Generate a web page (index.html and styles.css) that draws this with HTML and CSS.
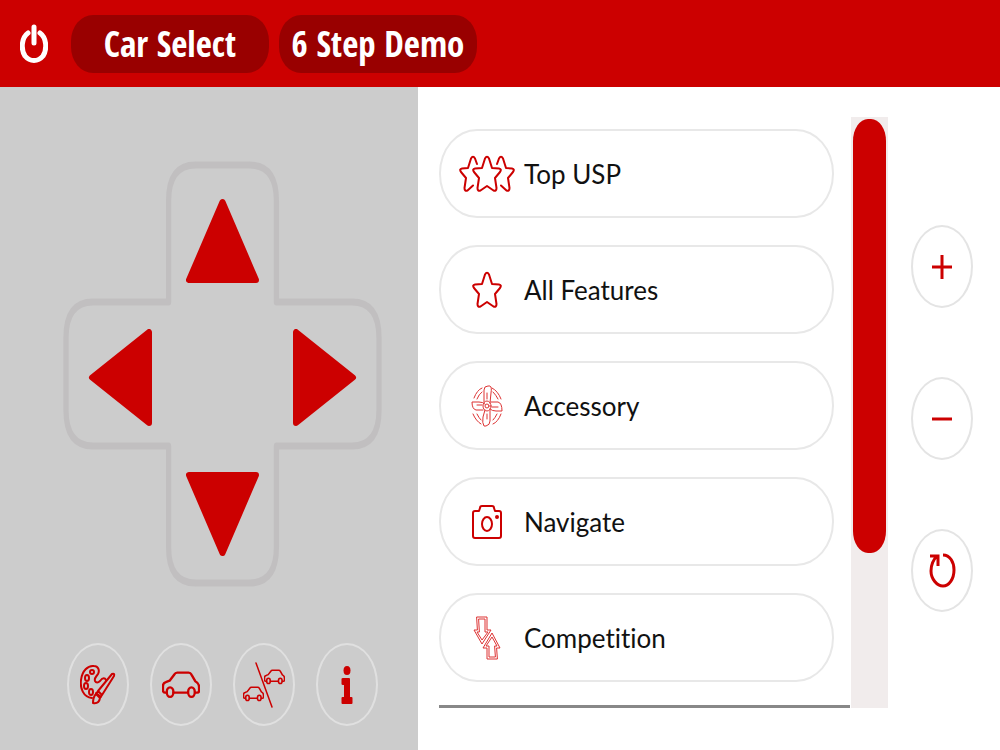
FILE: index.html
```html
<!DOCTYPE html>
<html lang="en">
<head>
    <meta charset="UTF-8">
    <meta name="viewport" content="width=device-width, initial-scale=1.0">
    <title>Car Remote</title>
    <link rel="stylesheet" href="styles.css">
</head>
<body>
    <svg class="sprite" aria-hidden="true">
        <symbol id="star" viewBox="0 0 30 38">
            <path d="M13 3.500q2-3.500 4 0l3 9.500 7 .5q3 .5 1 3.500l-5 6 1.500 10q0 3.500-3 2.500L15 31l-6.500 4.500q-3 1-3-2.500L7 23l-5-6q-2-3 1-3.500l7-.5z"/>
        </symbol>
        <symbol id="car" viewBox="0 0 40 28">
            <path d="M5 22H3q-2 0-2-3v-4q0-3 3-4l4-1.500L13 3q1-2 3-2h12q2 0 3 2l4 7q4 2 4 6v4q0 2-2 2h-2M12 22h15"/>
            <ellipse cx="8.500" cy="21.500" rx="3.500" ry="5"/>
            <ellipse cx="31" cy="21.500" rx="3.500" ry="5"/>
        </symbol>
    </svg>

    <header class="topbar">
        <button class="power" aria-label="Power">
            <svg width="28" height="40" viewBox="0 0 28 40">
                <path d="M8 9C1 14 1 26 5 32c5 6 13 6 18 0C27 26 27 14 20 9M14 3v16"/>
            </svg>
        </button>
        <nav class="tabs">
            <button class="tab">Car Select</button>
            <button class="tab">6 Step Demo</button>
        </nav>
    </header>

    <main class="content">
        <section class="controls">
            <div class="dpad">
                <svg class="dpad-outline" viewBox="0 0 426 426" preserveAspectRatio="none" aria-hidden="true">
                    <path d="M141 141V40q0-36 36-36h72q36 0 36 36v101h101q36 0 36 36v72q0 36-36 36H285v101q0 36-36 36h-72q-36 0-36-36V285H40q-36 0-36-36v-72q0-36 36-36z"/>
                </svg>
                <button class="arrow up" aria-label="Up">
                    <svg width="73" height="85" viewBox="0 0 73 85"><path d="M36.500 4L3 82h67z"/></svg>
                </button>
                <button class="arrow left" aria-label="Left">
                    <svg width="64" height="97" viewBox="0 0 64 97"><path d="M4 48.500L61 3v91z"/></svg>
                </button>
                <button class="arrow right" aria-label="Right">
                    <svg width="64" height="97" viewBox="0 0 64 97"><path d="M60 48.500L3 3v91z"/></svg>
                </button>
                <button class="arrow down" aria-label="Down">
                    <svg width="73" height="85" viewBox="0 0 73 85"><path d="M36.500 81L3 3h67z"/></svg>
                </button>
            </div>

            <div class="tools">
                <button class="round" aria-label="Colours">
                    <svg width="36" height="42" viewBox="0 0 36 42">
                        <path d="M12 34C3 33 0 24 1 16 2 7 8 1 14 2c4 0 6 4 4 8-2 3-4 4-3 7 1 2 3 2 5 0 3-4 5-3 6-1"/>
                        <ellipse cx="12" cy="8" rx="2" ry="2"/>
                        <ellipse cx="7" cy="14" rx="2" ry="3"/>
                        <ellipse cx="6" cy="22" rx="2" ry="3"/>
                        <ellipse cx="11" cy="28" rx="2" ry="3"/>
                        <path d="M18 27L32 10q3-1 2 2L22 31zM16 29l5 4M18 27l-2 3 4 4 2-3M16 30q3 0 4 4-1 6-7 5 0-6 3-9z"/>
                    </svg>
                </button>
                <button class="round" aria-label="Exterior">
                    <svg class="car" width="38" height="28"><use href="#car"/></svg>
                </button>
                <button class="round" aria-label="Compare cars">
                    <svg width="42" height="46" viewBox="0 0 42 46">
                        <path class="slash" d="M13 1l16 44"/>
                        <use href="#car" x="21" y="7" width="21" height="16" class="mini"/>
                        <use href="#car" x="0" y="24" width="21" height="16" class="mini"/>
                    </svg>
                </button>
                <button class="round" aria-label="Information">
                    <svg class="solid" width="12" height="38" viewBox="0 0 12 38">
                        <ellipse cx="6" cy="4.500" rx="3.500" ry="4.500"/>
                        <path d="M2 12h6q1 0 1 1v18h1.500q1 0 1 1v5q0 1-1 1h-9q-1 0-1-1v-5q0-1 1-1H3V19H2q-1.500 0-1.500-1v-5q0-1 1.500-1z"/>
                    </svg>
                </button>
            </div>
        </section>

        <section class="menu">
            <div class="list">
                <button class="item">
                    <span class="icon">
                        <svg width="56" height="38" viewBox="0 0 56 38">
                            <path d="M18 9l-2-5.500q-2-3.500-4 0L9 13l-6 .5q-3 .5-1 3.500l5 6-1.500 10q0 3.500 3 2.500l5.500-5M38 9l2-5.500q2-3.500 4 0l3 9.500 6 .5q3 .5 1 3.500l-5 6 1.500 10q0 3.500-3 2.500L42 30.500"/>
                            <use href="#star" x="13" width="30" height="38"/>
                        </svg>
                    </span>
                    Top USP
                </button>
                <button class="item">
                    <span class="icon"><svg width="30" height="38"><use href="#star"/></svg></span>
                    All Features
                </button>
                <button class="item">
                    <span class="icon">
                        <svg class="fine" width="32" height="42" viewBox="0 0 32 42">
                            <ellipse cx="16" cy="21" rx="4" ry="5"/>
                            <ellipse cx="16" cy="21" rx="2" ry="2"/>
                            <path d="M13 17V5q0-4 4-4h2q2 1 1 7l-1 10M19 25v11q0 4-4 5h-2q-2-3-1-9l2-7M12 25H5q-4-1-4-8h7q4 0 6 2M20 17h7q4 1 4 9h-6q-4 0-6-2M16 8v6M16 29v5M6 20h5M21 22h6"/>
                            <path d="M3 13q3-8 8-10M21 3q6 3 9 11M2 29q3 7 8 10M22 39q5-2 8-10M6 14q2-5 5-7M22 7q3 3 5 7M6 29q2 4 4 6M22 35q2-2 4-6"/>
                        </svg>
                    </span>
                    Accessory
                </button>
                <button class="item">
                    <span class="icon">
                        <svg width="30" height="34" viewBox="0 0 30 34">
                            <path d="M1 8q0-2 2-2h4l1-3q0-2 2-2h10q2 0 2 2l1 3h4q2 0 2 2v23q0 2-2 2H3q-2 0-2-2z"/>
                            <ellipse cx="15" cy="19" rx="5" ry="7"/>
                            <ellipse class="dot" cx="25" cy="12" rx="1" ry="1"/>
                        </svg>
                    </span>
                    Navigate
                </button>
                <button class="item">
                    <span class="icon">
                        <svg class="fine" width="28" height="44" viewBox="0 0 28 44">
                            <path d="M4 1h10v13h4L9 28 1 14h3zM6 3h6v13h3L9 24 4 16h2z"/>
                            <path d="M24 43H14V32h-4l9-15 8 15h-3zM22 41h-6V30h-3l6-9 5 9h-2z"/>
                        </svg>
                    </span>
                    Competition
                </button>
            </div>
            <div class="scrollbar"><div class="thumb"></div></div>
        </section>

        <aside class="zoom">
            <button class="round" aria-label="Zoom in">
                <svg width="20" height="26" viewBox="0 0 20 26"><path d="M10 1v24M0 13h20"/></svg>
            </button>
            <button class="round" aria-label="Zoom out">
                <svg width="20" height="26" viewBox="0 0 20 26"><path d="M0 13h20"/></svg>
            </button>
            <button class="round" aria-label="Reset">
                <svg width="27" height="35" viewBox="0 0 27 35">
                    <path d="M14 2c7 0 11 7 11 15 0 9-5 16-11 16S2 26 2 18C2 11 4 7 8 3M1 3h8v10"/>
                </svg>
            </button>
        </aside>
    </main>
</body>
</html>
```

FILE: styles.css
```css
* {
    box-sizing: border-box;
}
body {
    display: flex;
    flex-direction: column;
    min-height: 100vh;
    margin: 0;
    background-color: #fff;
    font-family: Lato, sans-serif;
}
button {
    padding: 0;
    border: none;
    background: none;
    color: inherit;
    font-family: inherit;
    cursor: pointer;
}
svg {
    display: block;
    fill: none;
    stroke: #c00;
    stroke-width: 2;
    stroke-linecap: round;
    stroke-linejoin: round;
}
.sprite {
    display: none;
}
.topbar {
    display: flex;
    align-items: center;
    gap: 23px;
    height: 87px;
    padding: 0 20px;
    background-color: #c00;
    color: #fff;
}
.power svg {
    stroke: #fff;
    stroke-width: 5;
}
.tabs {
    display: flex;
    gap: 10px;
}
.tab {
    width: 198px;
    height: 58px;
    border-radius: 22px / 26px;
    background-color: #900;
    font-family: "Open Sans Condensed", "Open Sans", sans-serif;
    font-size: 35px;
    font-weight: bold;
}
.content {
    display: flex;
    flex: 1;
}
.controls {
    display: flex;
    flex: 0 0 auto;
    flex-direction: column;
    align-items: center;
    gap: 56px;
    width: 41.8%;
    padding: 74px 0 25px 27px;
    background-color: #ccc;
}
.dpad {
    display: grid;
    grid-template-columns: 106px 107px 106px;
    grid-template-rows: 142px 142px 142px;
}
.dpad-outline {
    grid-area: 1 / 1 / 4 / 4;
    width: 100%;
    height: 100%;
    stroke: #c1bfc0;
    stroke-width: 7;
}
.arrow {
    display: grid;
    place-items: center;
}
.arrow svg {
    fill: #c00;
    stroke-width: 6;
}
.up {
    grid-area: 1 / 2;
    padding-top: 16px;
}
.left {
    grid-area: 2 / 1;
    padding: 6px 0 0 8px;
}
.right {
    grid-area: 2 / 3;
    padding: 6px 8px 0 0;
}
.down {
    grid-area: 3 / 2;
    padding-bottom: 4px;
}
.tools {
    display: flex;
    gap: 21px;
}
.round {
    display: grid;
    place-items: center;
    width: 62px;
    height: 83px;
    border: 2px solid #e0e0e0;
    border-radius: 50%;
}
.car {
    stroke-width: 2.5;
}
.mini {
    stroke-width: 3;
}
.slash {
    stroke-width: 1.5;
}
.dot {
    fill: #c00;
}
.solid {
    fill: #c00;
    stroke: none;
}
.fine {
    stroke: #d33;
    stroke-width: 1;
}
.menu {
    display: flex;
    flex: 1;
    gap: 1px;
    margin: 30px 23px 43px 21px;
}
.list {
    display: flex;
    flex: 1;
    flex-direction: column;
    gap: 27px;
    padding: 12px 16px 0 0;
    border-bottom: 3px solid #888;
}
.item {
    display: flex;
    align-items: center;
    gap: 9px;
    height: 89px;
    padding: 0 18px;
    border: 2px solid #e8e8e8;
    border-radius: 38px / 44px;
    color: #111;
    font-size: 26px;
    font-variant-ligatures: none;
}
.icon {
    display: grid;
    place-items: center;
    width: 56px;
}
.scrollbar {
    width: 37px;
    padding: 2px;
    background-color: #f1ecec;
}
.thumb {
    height: 74%;
    border-radius: 15px / 22px;
    background-color: #c00;
}
.zoom {
    display: flex;
    flex-direction: column;
    gap: 69px;
    padding: 138px 27px 0 0;
}
.zoom .round {
    border-color: #e4e4e4;
}
.zoom svg {
    stroke-width: 3;
    stroke-linecap: butt;
    stroke-linejoin: miter;
}
```
